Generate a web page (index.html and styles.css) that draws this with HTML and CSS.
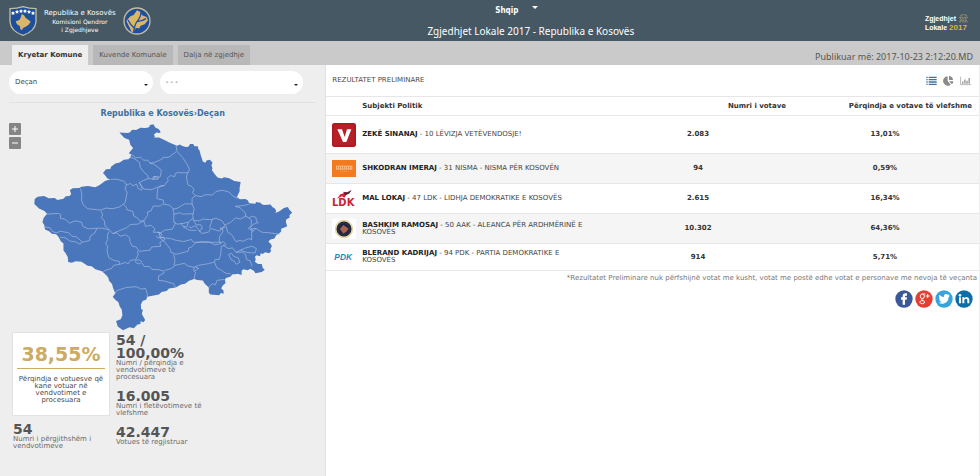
FILE: index.html
```html
<!DOCTYPE html>
<html lang="sq">
<head>
<meta charset="utf-8">
<meta name="viewport" content="width=device-width, initial-scale=1">
<title>Zgjedhjet Lokale 2017 - Republika e Kosovës</title>
<link rel="stylesheet" href="styles.css">
</head>
<body>
<header class="top">
  <div class="brand">
    <svg class="crest" viewBox="0 0 84 90" aria-hidden="true">
      <path d="M3 8Q24 8 42 2Q60 8 81 8V48Q78 76 42 88Q6 76 3 48Z" fill="#1d4f9c" stroke="#c4bd9f" stroke-width="4"/>
      <path d="M12 15l2 4 4 1-3 3 1 4-4-2-4 2 1-4-3-3 4-1zM24 11l2 4 4 1-3 3 1 4-4-2-4 2 1-4-3-3 4-1zM36 9l2 4 4 1-3 3 1 4-4-2-4 2 1-4-3-3 4-1zM48 9l2 4 4 1-3 3 1 4-4-2-4 2 1-4-3-3 4-1zM60 11l2 4 4 1-3 3 1 4-4-2-4 2 1-4-3-3 4-1zM72 15l2 4 4 1-3 3 1 4-4-2-4 2 1-4-3-3 4-1z" fill="#fff"/>
      <path d="M38 24l7 4 5 8 8 5 7 6-6 9-9 6-8 4-3 7-5-4-1-8-9-6-4-9 11-4 4-7z" fill="#dcb56d"/>
    </svg>
    <p class="brand-text"><span class="brand-main">Republika e Kosovës</span><span>Komisioni Qendror</span><span>i Zgjedhjeve</span></p>
    <svg class="seal" viewBox="0 0 84 84" aria-hidden="true">
      <circle cx="42" cy="42" r="39" fill="#1d4f9c" stroke="#c4bd9f" stroke-width="4"/>
      <path d="M10 42l12-14 10-4 10-14 10 5 5 10 14 5 4 10-10 12-12 4-4 8-11-1-4 10-8 3-5-12z" fill="#dcb56d"/>
      <path d="M54 16Q53 32 42 44Q34 54 32 77M15 39Q22 53 34 64M69 35Q57 43 42 44" fill="none" stroke="#1d4f9c" stroke-width="4"/>
    </svg>
  </div>
  <div class="heading">
    <button class="lang" type="button">Shqip<span class="caret"></span></button>
    <h1>Zgjedhjet Lokale 2017 - Republika e Kosovës</h1>
  </div>
  <div class="campaign">
    <span class="campaign-row">Zgjedhjet
      <svg viewBox="0 0 30 24" class="ballot" aria-hidden="true"><path d="M8 7V2h15v5M3 9h24M5 13h20M5 17h20M3 21h24" fill="none" stroke="#b9ae74" stroke-width="2" stroke-dasharray="5 2"/></svg>
    </span>
    <span class="campaign-row">Lokale<b>2017</b></span>
  </div>
</header>

<div class="bar">
  <nav class="tabs">
    <a class="tab tab-on" href="#kryetar">Kryetar Komune</a>
    <a class="tab" href="#kuvende">Kuvende Komunale</a>
    <a class="tab" href="#dalja">Dalja në zgjedhje</a>
  </nav>
  <p class="published">Publikuar më: 2017-10-23 2:12:20.MD</p>
</div>

<main class="page">
  <aside class="side">
    <div class="filters">
      <div class="picker"><select aria-label="Komuna"><option>Deçan</option></select></div>
      <div class="picker"><select aria-label="Vendvotimi"><option>- - -</option></select></div>
    </div>
    <p class="crumb"><a href="#kosove">Republika e Kosovës</a>›<a href="#decan">Deçan</a></p>
    <div class="map-row">
      <div class="zoom">
        <button type="button" aria-label="Zmadho"><svg viewBox="0 0 12 12"><path d="M6 3v6M3 6h6"/></svg></button>
        <button type="button" aria-label="Zvogëlo"><svg viewBox="0 0 12 12"><path d="M3 6h6"/></svg></button>
      </div>
      <svg class="map" viewBox="99 22 780 624" role="img" aria-label="Harta e Kosovës">
        <path class="land" d="M357 50L380 52 388 50 395 42 407 43 420 36 432 37 440 36 446 34 448 28 458 26 465 36 474 40 480 48 478 52 468 50 460 56 463 62 460 65 475 65 490 72 506 80 520 86 530 90 537 86 545 91 555 94 563 93 568 85 578 85 580 91 592 92 592 99 596 103 600 118 606 137 614 141 617 134 627 132 635 140 632 149 635 157 633 162 642 175 650 185 662 188 670 184 685 187 700 195 719 198 716 215 716 226 708 243 717 250 733 249 740 253 745 262 763 263 765 258 778 260 783 265 791 267 808 265 814 273 821 277 825 283 823 291 836 285 848 276 860 273 864 280 873 290 865 297 865 305 855 310 854 317 858 330 848 335 840 338 840 346 833 353 825 357 820 367 808 370 802 376 810 384 812 390 808 398 810 405 804 411 792 408 785 413 779 411 777 420 767 417 762 421 764 431 761 436 771 443 782 443 785 455 791 460 782 467 763 471 759 464 748 457 740 462 727 459 722 463 722 476 710 472 703 474 695 474 688 481 675 485 672 490 674 500 665 508 661 516 668 522 668 532 660 530 655 536 628 534 624 528 624 513 612 502 606 492 590 491 580 488 565 493 553 502 541 504 525 513 505 516 498 524 483 527 475 534 440 541 437 550 427 553 421 564 422 578 427 580 424 592 434 610 429 617 420 614 420 622 411 624 400 635 388 632 382 634 368 641 352 630 347 613 361 608 366 596 364 579 358 570 354 557 344 549 337 541 345 531 338 515 335 503 326 493 324 484 318 477 305 465 285 459 274 450 262 448 244 436 226 435 215 439 204 437 203 423 196 410 190 403 190 382 182 375 175 362 168 354 155 353 147 345 135 340 132 325 127 318 131 305 141 293 133 285 117 277 103 264 104 249 113 242 132 240 146 247 164 246 172 252 190 248 197 241 208 240 213 234 209 223 217 217 237 216 244 212 263 210 285 214 298 207 314 195 330 190 321 188 316 180 308 171 317 160 330 159 332 153 345 143 358 140 370 132 384 130 390 124 392 115 385 112 398 97 390 88 386 72 372 67Z"/>
        <path class="lines" d="M390 116L400 120 405 126 420 124 429 133 442 133 448 142 461 140 484 130 487 125 505 124 526 108M388 124L400 127 417 140 419 154 430 169 441 178 444 188 460 190 462 182 470 188 480 181 482 162 471 153 459 145 448 142M458 182L473 182 472 190 457 190ZM526 88L529 107 545 124 559 145 566 160 563 170 541 171 533 169 524 173 522 182 509 179 500 187 503 193 491 209 480 209 471 219 469 248 488 252 490 262M444 188L430 193 416 200 425 217 423 223 413 217 408 204 397 210 391 203 378 206 371 196 350 190 330 190M416 200L430 219 453 221 470 214 491 209M378 206L374 218 380 230 374 260 359 272 337 278 317 276 301 282 262 278 249 266 244 252 245 234 241 218M370 265L378 274 379 281 397 286 400 300 411 306 418 315 430 314 442 296 440 288 451 285 458 270 479 270 486 264 506 267 517 277 520 294 519 314 524 322 515 339 491 342 474 356M560 171L557 186 562 207 572 211 580 221 575 230 584 239 601 242 614 236 635 237 646 226 665 223 684 228 697 241 711 247M584 239L574 247 574 264 553 263 529 277 517 279M574 264L580 278 576 300 579 313 597 314 605 309 632 311 645 306 663 314 672 327 690 318 704 305 718 309 735 300 732 289 717 275 703 271 730 268 745 264M732 299L744 306 753 300 765 304 766 316 772 319 756 325 749 334 753 342 742 337 751 327 751 311 744 306M519 294L539 290 546 294 577 293M519 318L529 324 547 322 563 318 577 306M563 318L558 332 547 330 539 321M577 313L587 326 600 326 605 337 596 342 603 352 623 348 630 337 656 345 672 327M635 308L626 336M563 330L571 335 584 328 598 348M547 332L566 342 587 343M430 314L435 331 451 327 463 338 458 348 476 348 479 366 488 362 493 370 478 378 480 390 454 392 448 402 416 405 407 392 395 390 388 375 388 365 376 356 359 360 350 350 337 352M430 314L412 324 390 325 378 335 356 344 337 352 324 338 314 330 312 314 303 304 307 296 302 284M139 294L175 292 182 296 180 306 196 310 208 321 225 314 244 318 248 331 264 338 290 336 304 336 326 341M134 332L150 335 157 346 170 350 180 345 206 350 215 360 229 362 247 378 268 373 270 360 284 350 290 336M180 363L196 365 208 374 226 377 240 384 245 376M326 346L321 357 322 370 316 382 322 390 320 403 325 424 340 432 356 435 358 444 340 447 334 456 315 462 307 468M358 444L376 438 383 443 390 432 406 430 413 416 411 404M404 435Q412 426 424 436Q418 447 409 441ZM424 440L432 451 446 450 454 459 475 460 487 463 490 470 474 479 474 492 492 494 519 502 525 513M491 463L513 456 523 447 551 441 562 449 580 453 594 447 623 442 641 437 643 430 655 429 660 413 661 391 675 385 666 375 660 382 642 386 627 378 604 376 584 380 572 393 564 395 562 405 527 414 510 408 510 400 501 388 490 375 475 362M480 364L510 367 521 371 548 376 572 370 578 378 660 378M661 382L655 374 656 361 666 347 665 337 657 335M657 340L676 331 680 348 692 355 705 376 717 373 727 375 743 367 752 371 752 349 765 337 782 348 804 350 836 354M520 447L523 433 519 414M580 453L579 463 584 468 580 488M641 437L648 455 662 462 673 470 690 473M624 512L634 502 644 505 648 492 671 489M667 387L682 397 695 395 705 408 725 408 733 414 737 430 748 434 753 450M705 408L718 402 740 409 762 410 766 397 753 390 731 396 718 402M683 414L692 411 698 420 712 425 717 438 706 444 699 434 690 430ZM752 349L754 338 765 337M342 533L350 522 378 513 407 511 423 518 435 516 440 531 440 541M469 349L479 349 484 356 474 366 466 360M584 452L594 456 580 465"/>
      </svg>
    </div>
    <div class="stats">
      <div class="stats-col">
        <div class="turnout"><strong>38,55%</strong><p>Përqindja e votuesve që kane votuar në vendvotimet e procesuara</p></div>
        <div class="stat"><strong>54</strong><p>Numri i përgjithshëm i vendvotimeve</p></div>
      </div>
      <div class="stats-col stats-col-plain">
        <div class="stat"><strong>54 / 100,00%</strong><p>Numri / përqindja e vendvotimeve të procesuara</p></div>
        <div class="stat"><strong>16.005</strong><p>Numri i fletëvotimeve të vlefshme</p></div>
        <div class="stat"><strong>42.447</strong><p>Votues të regjistruar</p></div>
      </div>
    </div>
  </aside>

  <section class="results">
    <div class="results-head">
      <h2>REZULTATET PRELIMINARE</h2>
      <div class="views">
        <button type="button" aria-label="Listë"><svg viewBox="0 0 33 28"><path d="M1 3h4M8 3h24M1 10h4M8 10h24M1 17h4M8 17h24M1 24h4M8 24h24" stroke="#41719f" stroke-width="4"/></svg></button>
        <button type="button" aria-label="Rrethore"><svg viewBox="0 0 33 30"><path d="M14 15V1A14 14 0 1 0 23 26Z" fill="#8a8a8a"/><path d="M18 12V0A13 13 0 0 1 30 12ZM18 16H31A14 14 0 0 1 27 25Z" fill="#8a8a8a"/></svg></button>
        <button type="button" aria-label="Shtylla"><svg viewBox="0 0 36 28"><path d="M2 0V26H36" fill="none" stroke="#8a8a8a" stroke-width="2"/><path d="M9 23V16M16 23V9M23 23V13M30 23V4" stroke="#8a8a8a" stroke-width="4"/></svg></button>
      </div>
    </div>
    <table>
      <thead>
        <tr><th class="c-logo" aria-label="Logo"></th><th class="c-name">Subjekti Politik</th><th class="c-num">Numri i votave</th><th class="c-pct">Përqindja e votave të vlefshme</th></tr>
      </thead>
      <tbody>
        <tr class="r-tall">
          <td><svg class="logo" viewBox="0 0 72 72"><rect width="72" height="72" rx="7" fill="#b81e25"/><rect x="3" y="3" width="66" height="66" rx="5" fill="none" stroke="#9d1219" stroke-width="2"/><path d="M16 19H30L38 42 45 19H58L43 57H33Z" fill="#fff"/></svg></td>
          <td class="who"><b>ZEKË SINANAJ</b> - 10 LËVIZJA VETËVENDOSJE!</td><td class="val">2.083</td><td class="val">13,01%</td>
        </tr>
        <tr>
          <td><svg class="logo" viewBox="0 0 72 51"><rect width="72" height="51" fill="#f47a20"/><path d="M12 17H61V29H12Z" fill="#f9b783"/><path d="M15 23H58" stroke="#f47a20" stroke-width="5" stroke-dasharray="3 3"/><path d="M24 34H49" stroke="#f9a764" stroke-width="2" stroke-dasharray="4 2"/></svg></td>
          <td class="who"><b>SHKODRAN IMERAJ</b> - 31 NISMA - NISMA PËR KOSOVËN</td><td class="val">94</td><td class="val">0,59%</td>
        </tr>
        <tr>
          <td><svg class="logo" viewBox="0 0 72 54"><path d="M15 26L25 13 36 10 34 5 46 7 58 1 53 10 43 14 37 23 30 19Z" fill="#d02436"/><path d="M33 8L47 7 58 1 50 11 40 16Z" fill="#383238"/><text class="ldk" x="0" y="49">LDK</text></svg></td>
          <td class="who"><b>MAL LOKAJ</b> - 47 LDK - LIDHJA DEMOKRATIKE E KOSOVËS</td><td class="val">2.615</td><td class="val">16,34%</td>
        </tr>
        <tr>
          <td><svg class="logo" viewBox="0 0 72 60"><rect width="72" height="60" fill="#fff"/><circle cx="36" cy="30" r="25" fill="#20253d" stroke="#e2d5a4" stroke-width="5"/><circle cx="36" cy="30" r="18" fill="none" stroke="#464653" stroke-width="3" stroke-dasharray="2 3"/><path d="M34 18L50 29 43 38 34 44 24 30Z" fill="#a8644e"/></svg></td>
          <td class="who"><b>BASHKIM RAMOSAJ</b> - 50 AAK - ALEANCA PËR ARDHMËRINË E KOSOVËS</td><td class="val">10.302</td><td class="val">64,36%</td>
        </tr>
        <tr class="r-low">
          <td><svg class="logo" viewBox="0 0 72 42"><text class="pdk" x="7" y="31">PDK</text></svg></td>
          <td class="who"><b>BLERAND KADRIJAJ</b> - 94 PDK - PARTIA DEMOKRATIKE E KOSOVËS</td><td class="val">914</td><td class="val">5,71%</td>
        </tr>
      </tbody>
    </table>
    <p class="note">*Rezultatet Preliminare nuk përfshijnë votat me kusht, votat me postë edhe votat e personave me nevoja të veçanta</p>
    <div class="social">
      <a href="#facebook" aria-label="Facebook"><svg viewBox="0 0 54 54"><circle cx="27" cy="27" r="26" fill="#3b5998"/><path d="M23 44V29H18V22H23V18Q23 10 31 10H36V17H33Q30 17 30 20V22H36L35 29H30V44Z" fill="#fff"/></svg></a>
      <a href="#google" aria-label="Google+"><svg viewBox="0 0 54 54"><circle cx="27" cy="27" r="26" fill="#e33f32"/><g fill="none" stroke="#fff" stroke-width="3"><ellipse cx="22" cy="19" rx="6" ry="7"/><path d="M22 26Q17 29 23 31Q31 34 28 39Q24 43 17 40Q11 36 17 33Q20 31 24 32M23 12H31M38 12V24M32 18H44"/></g></svg></a>
      <a href="#twitter" aria-label="Twitter"><svg viewBox="0 0 54 54"><circle cx="27" cy="27" r="26" fill="#37a4dc"/><path d="M13 14Q19 21 27 21Q26 13 33 12Q37 12 39 15L43 13 41 17 45 17 41 21Q40 38 25 41Q17 42 11 38Q17 38 20 36Q14 35 13 31H17Q11 28 12 23L15 24Q10 20 13 14Z" fill="#fff"/></svg></a>
      <a href="#linkedin" aria-label="LinkedIn"><svg viewBox="0 0 54 54"><circle cx="27" cy="27" r="26" fill="#0d6ea8"/><path d="M12 22H18V40H12ZM22 22H28V25Q31 21 36 21Q43 22 43 30V40H37V31Q37 26 33 26Q28 26 28 31V40H22Z" fill="#fff"/><circle cx="15" cy="16" r="4" fill="#fff"/></svg></a>
    </div>
  </section>
</main>
</body>
</html>
```
FILE: styles.css
```css
* { box-sizing: border-box; }
body { margin: 0; min-height: 100vh; display: flex; flex-direction: column; background: #fff; color: #4a4a4a; font: 7px/7px "DejaVu Sans", Verdana, sans-serif; }
p, h1, h2 { margin: 0; font-weight: normal; }
button { border: 0; padding: 0; background: none; font: inherit; color: inherit; display: block; }
a { color: inherit; text-decoration: none; }
svg { display: block; }

.top { display: grid; grid-template-columns: 5fr auto 4fr; height: 41px; padding: 0 11px 0 9px; background: #455863; color: #fff; }
.brand { display: flex; align-items: center; gap: 7px; }
.crest { width: 28px; height: 30px; }
.seal { width: 28px; height: 28px; }
.brand-text { display: flex; flex-direction: column; align-items: center; font-size: 6px; line-height: 8px; padding-top: 2px; }
.brand-text .brand-main { font-size: 7px; line-height: 9px; }
.heading { display: flex; flex-direction: column; align-items: center; padding-top: 6px; }
.lang { display: flex; gap: 14px; padding-right: 28px; font: bold 8px/10px "DejaVu Sans Condensed", "DejaVu Sans", sans-serif; }
.caret { border: 3px solid transparent; border-top-color: #fff; border-bottom: 0; height: 3px; }
.heading h1 { font: 10px/14px "Noto Sans", sans-serif; margin-top: 8px; }
.campaign { justify-self: end; display: flex; flex-direction: column; align-items: flex-start; justify-content: center; padding-top: 4px; font: bold 7px/9px "Liberation Sans", sans-serif; }
.campaign-row { display: flex; gap: 2px; }
.campaign b { color: #d6bc32; font-size: 8px; }
.ballot { width: 11px; height: 9px; }

.bar { display: flex; justify-content: space-between; height: 24px; padding: 4px 7px 0 12px; background: #cacaca; }
.tabs { display: flex; gap: 5px; }
.tab { display: flex; align-items: center; padding: 0 6px; background: #b8b8b8; color: #555; }
.tab-on { background: #eee; color: #333; font-weight: bold; }
.published { font: 9px/24px "Noto Sans", sans-serif; color: #555; }

.page { flex: 1; display: flex; }
.side { width: 33.3%; flex: none; background: #eee; border-right: 1px solid #e2e2e2; padding: 6px 9px 0; }
.filters { display: flex; gap: 7px; padding-bottom: 8px; padding-right: 13px; border-bottom: 1px solid #e2e2e2; }
.picker { position: relative; flex: 1; }
.picker::after { content: ""; position: absolute; right: 5px; top: 13px; border: 2px solid transparent; border-top: 2px solid #222; border-bottom: 0; }
.picker select { appearance: none; width: 100%; height: 23px; padding: 0 6px; border: 0; border-radius: 12px; background: #fff; color: #444; font: inherit; }
.crumb { text-align: center; padding: 6px 0 4px; font-size: 8px; line-height: 10px; font-weight: bold; color: #41719f; }
.map-row { display: flex; gap: 12px; }
.zoom { display: flex; flex-direction: column; gap: 2px; }
.zoom button { width: 12px; height: 12px; border-radius: 1px; background: #858585; }
.zoom svg { width: 12px; height: 12px; stroke: #fff; }
.map { width: 85%; aspect-ratio: 780 / 624; }
.land { fill: #4a76bb; }
.lines { fill: none; stroke: #a7bde0; stroke-width: 2; stroke-linejoin: round; }

.stats { display: flex; gap: 5px; padding-left: 3px; }
.stats-col { width: 98px; }
.turnout { display: flex; flex-direction: column; padding: 12px 4px; height: 84px; background: #fff; border: 1px solid #e2e2e2; text-align: center; margin-bottom: 7px; }
.turnout strong { font-size: 19px; line-height: 19px; color: #cdab63; padding-bottom: 4px; margin-bottom: 7px; border-bottom: 1px solid #cdab63; }
.stat { color: #6a6a6a; padding-left: 1px; }
.stat strong { display: block; font-size: 14px; line-height: 13px; color: #555; }
.stats-col-plain { display: flex; flex-direction: column; gap: 9px; padding-top: 2px; }

.results { flex: 1; min-width: 0; border-right: 1px solid #eee; }
.results-head { display: flex; justify-content: space-between; align-items: center; height: 31px; padding: 0 8px 0 6px; }
.results-head h2 { font-size: 7px; line-height: 9px; }
.views { display: flex; gap: 6px; }
.views svg { height: 10px; width: 11px; }
table { width: 100%; table-layout: fixed; border-collapse: collapse; color: #444; }
td, th { padding: 0; text-align: left; border-top: 1px solid #e6e6e6; }
th { height: 19px; color: #333; }
.c-logo { width: 5.5%; }
.c-name { width: 37.2%; }
.c-num { width: 28.5%; text-align: right; padding-right: 5px; }
.c-pct { text-align: right; padding-right: 7px; }
tbody td { height: 30px; }
tbody .r-tall td { height: 38px; }
tbody .r-low td { height: 27px; border-bottom: 1px solid #e6e6e6; }
tbody tr:nth-child(even) { background: #f5f5f5; }
td b { color: #222; }
.who { padding-right: 17px; }
.val { text-align: center; font-weight: bold; color: #333; }
.logo { width: 24px; margin-left: 6px; }
.ldk { font: bold 30px "DejaVu Sans", sans-serif; fill: #c92434; }
.pdk { font: italic bold 25px "Liberation Sans", sans-serif; fill: #2189bd; }
.note { text-align: right; padding: 3px 2px 0 0; line-height: 9px; color: #777; }
.social { display: flex; justify-content: flex-end; gap: 2px; padding: 7px 6px 0 0; }
.social svg { width: 18px; height: 18px; }
```
